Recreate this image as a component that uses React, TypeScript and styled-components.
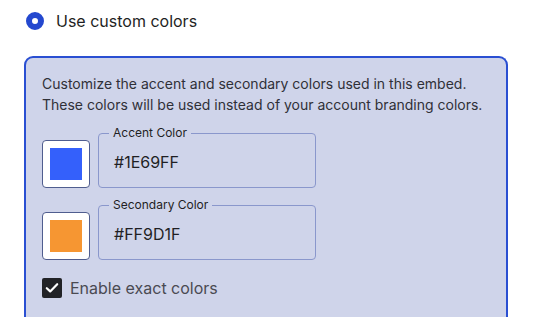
import styled, { createGlobalStyle } from "styled-components";

const GlobalStyle = createGlobalStyle`
	html, body {
		margin: 0;
		padding: 0;
		background: #ffffff;
		overflow: hidden;
	}
	body {
		font-family: Inter, "Noto Sans", sans-serif;
		color: #222;
	}
`;

const Page = styled.div`
	padding: 10px 25px 0 24px;
	width: 484px;
	height: 317px;
	box-sizing: content-box;
	display: flex;
	flex-direction: column;
`;

const RadioRow = styled.label`
	display: flex;
	align-items: center;
	gap: 12px;
	height: 22px;
	font-size: 16px;
	color: #1f1f24;
	margin-left: 2px;
`;

const RadioDot = styled.span`
	width: 18px;
	height: 18px;
	box-sizing: border-box;
	border-radius: 50%;
	border: 6px solid #2448cf;
	background: #fff;
`;

const Panel = styled.div`
	flex: 1;
	margin-top: 24px;
	border: 2px solid #2a4fd2;
	border-bottom: none;
	border-radius: 9px 9px 0 0;
	background: #cfd4ea;
	padding: 15px 16px 18px 16px;
`;

const Description = styled.p`
	margin: 0 0 11px;
	font-size: 14px;
	line-height: 21px;
	color: #2f3038;
`;

const ColorRow = styled.div`
	display: flex;
	align-items: flex-end;
	gap: 8px;
	margin-bottom: 10px;
`;

const Swatch = styled.div<{ $color: string }>`
	width: 48px;
	height: 48px;
	box-sizing: border-box;
	background: #fff;
	border: 1px solid #4f5d8f;
	border-radius: 4px;
	padding: 7px;

	&::after {
		content: "";
		display: block;
		width: 32px;
		height: 32px;
		background: ${(p) => p.$color};
	}
`;

const Field = styled.fieldset`
	margin: 0;
	width: 218px;
	height: 62px;
	box-sizing: border-box;
	border: 1px solid #8a97cc;
	border-radius: 4px;
	padding: 0 15px 0 15px;

	legend {
		font-size: 12px;
		padding: 0 4px;
		margin-left: -5px;
		color: #1f1f24;
		line-height: 14px;
	}
`;

const FieldValue = styled.div`
	font-size: 16px;
	color: #1f1f24;
	line-height: 20px;
	padding-top: 12px;
`;

const CheckRow = styled.label`
	display: flex;
	align-items: center;
	gap: 8px;
	font-size: 16px;
	color: #4a4a52;
	margin-top: 18px;
`;

const CheckBox = styled.span`
	width: 20px;
	height: 20px;
	border-radius: 2px;
	background: #222327;
	display: flex;
	align-items: center;
	justify-content: center;
`;

const colors = [
	{ label: "Accent Color", value: "#1E69FF", swatch: "#3460fb" },
	{ label: "Secondary Color", value: "#FF9D1F", swatch: "#f69632" },
];

export default function App() {
	return (
		<>
			<GlobalStyle />
			<Page>
				<RadioRow>
					<RadioDot />
					Use custom colors
				</RadioRow>
				<Panel>
					<Description>
						Customize the accent and secondary colors used in this embed.
						<br />
						These colors will be used instead of your account branding colors.
					</Description>
					{colors.map((c) => (
						<ColorRow key={c.label}>
							<Swatch $color={c.swatch} />
							<Field>
								<legend>{c.label}</legend>
								<FieldValue>{c.value}</FieldValue>
							</Field>
						</ColorRow>
					))}
					<CheckRow>
						<CheckBox>
							<svg width="14" height="12" viewBox="0 0 14 12">
								<path
									d="M1.8 6.2 L5.2 9.4 L12.2 2.2"
									fill="none"
									stroke="#fff"
									strokeWidth="2.2"
									strokeLinecap="round"
									strokeLinejoin="round"
								/>
							</svg>
						</CheckBox>
						Enable exact colors
					</CheckRow>
				</Panel>
			</Page>
		</>
	);
}
